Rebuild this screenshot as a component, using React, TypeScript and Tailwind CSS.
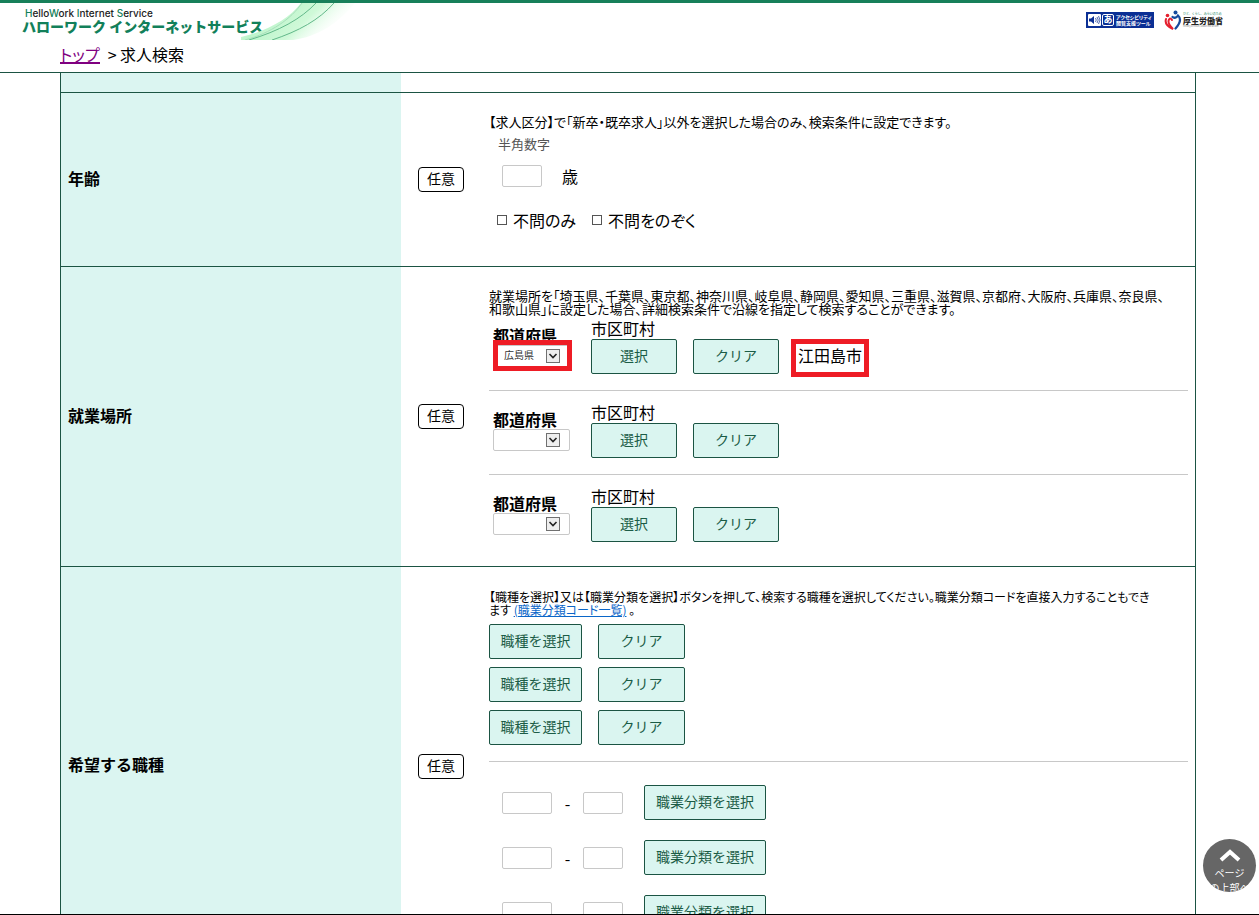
import type { ReactNode } from "react";

const ACTION =
  "flex h-[35px] shrink-0 items-center justify-center rounded-xs border border-[#1b5443] bg-[#daf5f0] pb-1 text-[14px] leading-none text-[#1b5c46]";
const FIELD = "h-[22px] rounded-xs border border-[#c8c8c8] bg-white px-1";

function Action({ width, children }: { width: string; children: ReactNode }) {
  return (
    <button type="button" className={`${ACTION} ${width}`}>
      {children}
    </button>
  );
}

function Row({ title, children }: { title: string; children: ReactNode }) {
  return (
    <section className="flex border-b border-[#1b5443]">
      <h2 className="flex w-[340px] shrink-0 items-center bg-[#dbf5f1] px-[7px] pb-1 text-[16px] font-bold leading-5">
        {title}
      </h2>
      <div className="flex w-[88px] shrink-0 items-center pl-[17px]">
        <span className="flex h-[25px] w-[46px] items-center justify-center rounded border border-black pb-[3px] text-[14px] leading-none">
          任意
        </span>
      </div>
      <div className="min-w-0 flex-1 pr-[7px]">{children}</div>
    </section>
  );
}

function Prefecture({ id, value, marked }: { id: string; value: string; marked?: boolean }) {
  return (
    <div className="relative w-[98px] shrink-0 pl-1 pt-[6px]">
      <label htmlFor={id} className="block text-[16px] font-bold leading-4">
        都道府県
      </label>
      <div className="relative mt-[2px] w-[77px]">
        <select
          id={id}
          defaultValue={value}
          className={`${FIELD} block w-full appearance-none pb-[2px] pl-[10px] text-[10px] leading-none text-[#333]`}
        >
          <option value=""></option>
          <option value="広島県">広島県</option>
        </select>
        <span className="pointer-events-none absolute right-[10px] top-1 flex h-[14px] w-[14px] items-center justify-center border border-[#707070] bg-[#eee]">
          <svg viewBox="0 0 10 8" className="h-2 w-[10px]" fill="none" stroke="#222" strokeWidth="1.6">
            <path d="M1.5 2 5 5.5 8.5 2" />
          </svg>
        </span>
      </div>
      {marked && (
        <span className="pointer-events-none absolute left-1 top-[19px] h-[31px] w-[79px] border-5 border-[#ee1c25]" />
      )}
    </div>
  );
}

function Place({ id, value = "", city }: { id: string; value?: string; city?: string }) {
  return (
    <li className="flex border-b border-[#c8c8c8] pb-4 pt-[14px] first:pt-0 last:border-b-0 last:pb-6">
      <Prefecture id={id} value={value} marked={city !== undefined} />
      <div className="ml-1">
        <p className="text-[16px] leading-[14px]">市区町村</p>
        <div className="mt-1 flex">
          <Action width="w-[86px]">選択</Action>
          <div className="ml-4">
            <Action width="w-[86px]">クリア</Action>
          </div>
          {city && (
            <span className="-mb-1 ml-3 flex h-[38px] items-center border-5 border-[#ee1c25] px-[2px] pb-[7px] text-[16px] leading-none">
              {city}
            </span>
          )}
        </div>
      </div>
    </li>
  );
}

function Check({ label }: { label: string }) {
  return (
    <label className="flex items-center gap-[6px]">
      <input type="checkbox" className="h-[10px] w-[10px] appearance-none border border-[#555] bg-white checked:bg-[#555]" />
      {label}
    </label>
  );
}

function ServiceLogo() {
  return (
    <div className="flex h-[37px]">
      <div className="pl-[22px] pt-[5px]">
        <p className="pl-[3px] font-[Inter,sans-serif] text-[10px] font-medium leading-[11px] text-[#222]">
          <span className="text-[#12805a]">H</span>ello<span className="text-[#12805a]">W</span>ork{" "}
          <span className="text-[#12805a]">I</span>nternet <span className="text-[#12805a]">S</span>ervice
        </p>
        <p className="whitespace-nowrap text-[14px] font-black leading-[15px] text-[#12805a]">
          ハローワーク インターネットサービス
        </p>
      </div>
      <svg viewBox="0 0 116 37" className="-ml-[22px] h-[37px] w-[116px]" fill="none">
        <defs>
          <linearGradient id="wave" x1="0" y1="0" x2="1" y2="0.35">
            <stop offset="0" stopColor="#b9f5c8" stopOpacity="0" />
            <stop offset="0.35" stopColor="#bdf5cb" />
            <stop offset="0.65" stopColor="#cff9d8" />
            <stop offset="1" stopColor="#ffffff" stopOpacity="0" />
          </linearGradient>
        </defs>
        <path d="M0 37V34C26 28 48 16 60 0H114C98 20 76 34 52 37Z" fill="url(#wave)" />
        <path d="M4 37C30 30 50 16 61 0" stroke="#a9dfbc" />
        <path d="M8 37C38 28 60 16 75 0M31 37C58 28 78 17 93 0" stroke="#62b88a" />
      </svg>
    </div>
  );
}

function AccessibilityLogo() {
  return (
    <a href="#accessibility" className="flex h-4 w-[68px] items-center gap-px bg-[#0b2f94] pl-[2px] text-white">
      <svg viewBox="0 0 13 12" className="h-3 w-[13px] shrink-0">
        <rect width="13" height="12" rx="1" fill="#fff" />
        <path d="M1 4.5h2L6 2v8L3 7.500H1Z" fill="#0b2f94" />
        <path d="M7.500 4q1.500 2 0 4M9 3q2.500 3 0 6M10.500 2q3 4 0 8" fill="none" stroke="#0b2f94" strokeWidth=".7" />
      </svg>
      <span className="flex h-3 w-3 shrink-0 items-center justify-center rounded-xs border border-white pb-px text-[9px] font-bold leading-none">
        あ
      </span>
      <span className="whitespace-nowrap pl-px text-[5px] font-bold leading-[6px] [font-feature-settings:'palt']">
        アクセシビリティ
        <br />
        閲覧支援ツール
      </span>
    </a>
  );
}

function MinistryLogo() {
  return (
    <a href="#mhlw" className="flex h-5 items-center text-[#222]">
      <svg viewBox="0 0 18 20" className="h-5 w-[18px] shrink-0" fill="none" strokeLinecap="round">
        <circle cx="3.500" cy="5.500" r="1.800" fill="#e5202e" />
        <circle cx="11.500" cy="2.500" r="2" fill="#174a9c" />
        <path d="M2 9Q0 15 9 19Q3 13 5 9.500Q6.500 7.500 8 10" stroke="#e5202e" strokeWidth="2" />
        <path d="M8.500 7Q12 9 14 5.500Q19 10 11.500 18.500" stroke="#174a9c" strokeWidth="2.200" />
      </svg>
      <span className="flex w-[43px] flex-col pl-px">
        <span className="whitespace-nowrap text-[3px] leading-[4px] text-[#17805a]">ひと、くらし、みらいのため</span>
        <span className="whitespace-nowrap text-[8px] font-black leading-[9px]">厚生労働省</span>
        <span className="whitespace-nowrap text-[2px] leading-[3px] text-[#777]">Ministry of Health, Labour and Welfare</span>
      </span>
    </a>
  );
}

const NOTE = "leading-[13px] [font-feature-settings:'palt']";

export default function App() {
  return (
    <div className="relative flex h-screen flex-col overflow-hidden border-b border-black bg-white font-['Noto_Sans_CJK_JP',sans-serif] text-black">
      <header className="shrink-0 border-b border-[#1b5443]">
        <div className="flex items-start justify-between border-t-3 border-[#17805a]">
          <ServiceLogo />
          <div className="flex items-center gap-[10px] pr-[34px] pt-[7px]">
            <AccessibilityLogo />
            <MinistryLogo />
          </div>
        </div>
        <nav className="flex h-8 items-center gap-2 pb-1 pl-[60px] text-[16px] leading-none [font-feature-settings:'palt']">
          <a href="#top" className="border-b-2 border-[#800080] pt-[2px] text-[#800080]">
            トップ
          </a>
          <span>&gt; 求人検索</span>
        </nav>
      </header>

      <main className="ml-[60px] mr-[63px] min-h-0 flex-1 overflow-hidden border-x border-[#1b5443]">
        <div className="flex border-b border-[#1b5443]">
          <div className="h-[19px] w-[340px] bg-[#dbf5f1]" />
        </div>

        <Row title="年齢">
          <div className="pb-[35px] pt-[22px]">
            <p className={`text-[13px] ${NOTE}`}>
              【求人区分】で「新卒・既卒求人」以外を選択した場合のみ、検索条件に設定できます。
            </p>
            <p className="pl-[9px] pt-[9px] text-[13px] leading-[13px] text-[#555]">半角数字</p>
            <label className="flex items-center gap-5 pl-[13px] pt-[15px] text-[16px] leading-[22px]">
              <input type="text" aria-label="年齢" className={`${FIELD} w-10 text-[13px]`} />歳
            </label>
            <div className="flex gap-4 pl-2 pt-[22px] text-[16px] leading-[22px] [font-feature-settings:'palt']">
              <Check label="不問のみ" />
              <Check label="不問をのぞく" />
            </div>
          </div>
        </Row>

        <Row title="就業場所">
          <p className={`pt-[22px] text-[13px] ${NOTE}`}>
            就業場所を「埼玉県、千葉県、東京都、神奈川県、岐阜県、静岡県、愛知県、三重県、滋賀県、京都府、大阪府、兵庫県、奈良県、
            <br />
            和歌山県」に設定した場合、詳細検索条件で沿線を指定して検索することができます。
          </p>
          <ul className="pt-[6px]">
            <Place id="pref1" value="広島県" city="江田島市" />
            <Place id="pref2" />
            <Place id="pref3" />
          </ul>
        </Row>

        <Row title="希望する職種">
          <p className={`pt-[23px] text-[12px] ${NOTE}`}>
            【職種を選択】又は【職業分類を選択】ボタンを押して、検索する職種を選択してください。職業分類コードを直接入力することもでき
            <br />
            ます{" "}
            <a href="#codes" className="text-[#0a66c8] underline">
              (職業分類コード一覧)
            </a>{" "}
            。
          </p>
          <div className="flex flex-col gap-2 border-b border-[#c8c8c8] pb-4 pt-2">
            {[1, 2, 3].map((n) => (
              <div key={n} className="flex gap-4">
                <Action width="w-[93px]">職種を選択</Action>
                <Action width="w-[87px]">クリア</Action>
              </div>
            ))}
          </div>
          <div className="flex flex-col gap-5 pb-[35px] pl-[13px] pt-[23px]">
            {[1, 2, 3].map((n) => (
              <div key={n} className="flex items-center">
                <input
                  type="text"
                  aria-label={`職業分類コード${n} 大分類`}
                  className={`${FIELD} w-[50px] text-[13px]`}
                />
                <span className="w-[31px] text-center text-[16px] leading-none">-</span>
                <input
                  type="text"
                  aria-label={`職業分類コード${n} 小分類`}
                  className={`${FIELD} mr-[21px] w-10 text-[13px]`}
                />
                <Action width="w-[122px]">職業分類を選択</Action>
              </div>
            ))}
          </div>
        </Row>
      </main>

      <a
        href="#top"
        className="absolute bottom-[22px] right-[3px] flex h-[53px] w-[53px] flex-col items-center overflow-hidden rounded-full bg-[#666] pt-[9px] text-center text-[10px] leading-[15px] text-white"
      >
        <svg viewBox="0 0 22 14" className="mb-[3px] h-[14px] w-[22px] shrink-0" fill="none" stroke="#fff" strokeWidth="4">
          <path d="M2 12 11 4 20 12" />
        </svg>
        <span>ページ</span>
        <span className="whitespace-nowrap">の上部へ</span>
      </a>
    </div>
  );
}
